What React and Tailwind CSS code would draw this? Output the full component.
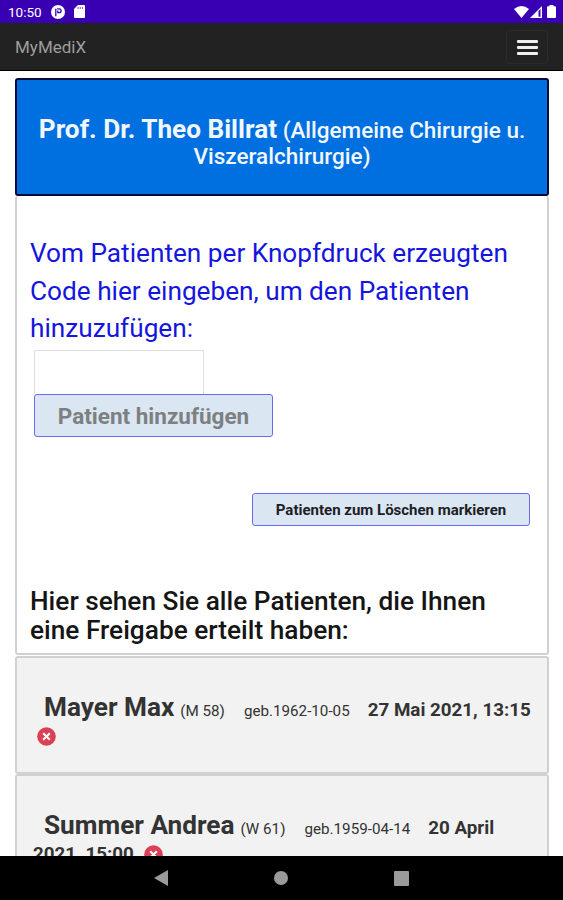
import React from 'react';

const patients = [
  { name: 'Mayer Max', info: '(M 58)', born: 'geb.1962-10-05', shared: '27 Mai 2021, 13:15' },
  { name: 'Summer Andrea', info: '(W 61)', born: 'geb.1959-04-14', shared: '20 April 2021, 15:00' },
];

const RemoveIcon = () => (
  <svg viewBox="0 0 20 20" className="inline-block w-[19px] h-[19px] ml-1 align-[-4px]">
    <circle cx="10" cy="10" r="9.8" fill="#dc4055" />
    <path d="M6.5 6.5l7 7M13.5 6.5l-7 7" stroke="#fff" strokeWidth="2.2" />
  </svg>
);

const StatusBar = () => (
  <div className="h-[23px] shrink-0 bg-[#3900b3] flex items-center justify-between pl-2 pr-[7px] text-white">
    <div className="flex items-center">
      <span className="w-[34px] text-[13.5px] leading-none pt-[2px]">10:50</span>
      <svg viewBox="0 0 14 14" className="w-[14px] h-[14px] ml-[9px]">
        <circle cx="7" cy="7" r="7" fill="#fff" />
        <path d="M4.8 11.2V3.8M6.2 3.8h2a1.9 1.9 0 010 3.8H6.8V5.5" fill="none" stroke="#3900b3" strokeWidth="1.3" />
      </svg>
      <svg viewBox="0 0 11 13" className="w-[11px] h-[13px] ml-[9px]">
        <path d="M4 0h6a1 1 0 011 1v11a1 1 0 01-1 1H1a1 1 0 01-1-1V4z" fill="#fff" />
        <path d="M4 2v2M6.2 2v2M8.4 2v2" stroke="#3900b3" strokeWidth="0.7" />
      </svg>
    </div>
    <div className="flex items-center">
      <svg viewBox="0 0 15 12" className="w-[15px] h-[12px]">
        <path d="M0 3Q7.5-3 15 3L7.5 12z" fill="#fff" />
      </svg>
      <svg viewBox="0 0 12 12" className="w-[12px] h-[12px] ml-[1px]">
        <path d="M0 12L12 0v12z" fill="#fff" />
        <path d="M8.5 5l2-2v7.8h-2z" fill="#3900b3" />
      </svg>
      <svg viewBox="0 0 9 13" className="w-[9px] h-[13px] ml-[5px]">
        <path d="M2.5 0h4v1.3H8a1 1 0 011 1V12a1 1 0 01-1 1H1a1 1 0 01-1-1V2.3a1 1 0 011-1h1.5z" fill="#fff" />
      </svg>
    </div>
  </div>
);

const Navbar = () => (
  <nav className="h-12 shrink-0 bg-[#222] border-b border-black flex items-center justify-between pl-[15px] pr-[15px]">
    <span className="pt-[2px] text-[17px] text-[#9d9d9d]">MyMediX</span>
    <button className="mt-px w-[42px] h-[34px] rounded border border-[#2b2b2b] flex flex-col items-center justify-center gap-[3px]">
      <span className="w-[21px] h-[3px] rounded-[1px] bg-[#eee]" />
      <span className="w-[21px] h-[3px] rounded-[1px] bg-[#eee]" />
      <span className="w-[21px] h-[3px] rounded-[1px] bg-[#eee]" />
    </button>
  </nav>
);

const PatientCard = ({ patient }) => (
  <div className="h-[118px] shrink-0 bg-[#f2f2f2] border-2 border-[#d0d2d2] rounded-[3px] pl-4 pr-3 pt-[36px] text-[#333] leading-[26px]">
    <span className="ml-[11px] text-[26.2px] leading-[26px] font-bold">{patient.name}</span>
    <span className="ml-[6px] text-[15.2px] leading-none">{patient.info}</span>
    <span className="ml-[19px] text-[15.2px] leading-none">{patient.born}</span>
    <span className="ml-[18px] mr-[2px] text-[18.8px] leading-none font-bold">{patient.shared}</span>{' '}
    <RemoveIcon />
  </div>
);

const App = () => {
  return (
    <div className="w-full h-screen flex flex-col overflow-hidden bg-white font-['Roboto',sans-serif]">
      <StatusBar />
      <Navbar />

      <main className="flex-1 min-h-0 overflow-hidden flex flex-col pl-[15px] pr-[14px] pt-[7px]">
        <header className="h-[118px] shrink-0 bg-[#0070e0] border-2 border-[#000b3a] rounded-[3px] pt-[36px] px-4 text-center text-[22.5px] text-[#f2f7ff] leading-[26px]">
          <span className="text-[26.2px] leading-none font-bold">Prof. Dr. Theo Billrat</span>{' '}
          <span className="font-medium leading-none">(Allgemeine Chirurgie u. Viszeralchirurgie)</span>
        </header>

        <section className="h-[459px] shrink-0 border-2 border-t-0 border-[#d0d2d2] rounded-[3px] px-[13px] pt-[39px] flex flex-col items-start">
          <p className="text-[26.2px] leading-[37.5px] text-[#1515dd]">
            Vom Patienten per Knopfdruck erzeugten Code hier eingeben, um den Patienten hinzuzufügen:
          </p>
          <input
            type="text"
            className="ml-1 mt-[2px] w-[170px] h-[44px] border border-b-0 border-[#dedede] outline-none"
          />
          <button className="ml-1 w-[239px] h-[43px] shrink-0 rounded-[3px] border border-[#6a6aee] bg-[#dbe6f3] pt-[3px] text-[22.5px] font-bold text-[#7d8080]">
            Patient hinzufügen
          </button>
          <button className="self-end mr-[4px] mt-[56px] w-[278px] h-[33px] shrink-0 rounded-[3px] border border-[#6a6aee] bg-[#dbe6f3] pt-[2px] text-[15px] font-bold text-[#1c2024]">
            Patienten zum Löschen markieren
          </button>
          <h2 className="mt-[61px] text-[26.25px] leading-[29px] font-medium text-[#151515]">
            Hier sehen Sie alle Patienten, die Ihnen eine Freigabe erteilt haben:
          </h2>
        </section>

        <div className="flex flex-col mt-[1px]">
          {patients.map((p) => (
            <PatientCard key={p.name} patient={p} />
          ))}
        </div>
      </main>

      <footer className="h-[44px] shrink-0 bg-black flex items-center justify-center">
        <svg viewBox="0 0 14 16" className="w-[14px] h-[16px]">
          <path d="M14 0v16L0 8z" fill="#9a9a9a" />
        </svg>
        <span className="w-[14px] h-[14px] mx-[106px] rounded-full bg-[#9a9a9a]" />
        <span className="w-[15px] h-[15px] rounded-[1px] bg-[#9a9a9a]" />
      </footer>
    </div>
  );
};

export default App;
